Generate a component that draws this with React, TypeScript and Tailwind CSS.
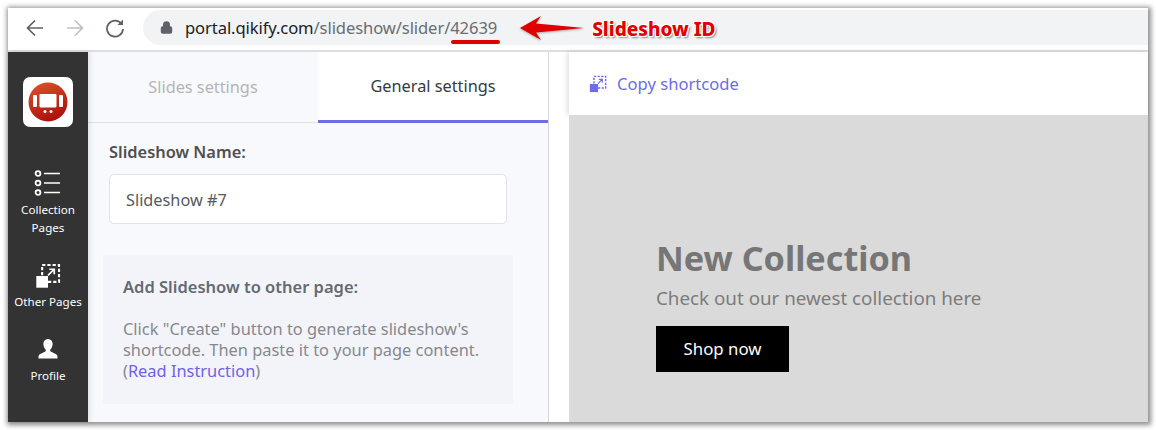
import { Lock } from 'lucide-react';

const CopyIcon = ({ color, size = 20 }: { color: string; size?: number }) => (
  <svg width={size} height={size} viewBox="0 0 20 20" fill="none">
    <rect x="5.5" y="1.5" width="13" height="13" stroke={color} strokeWidth="1.6" strokeDasharray="2.5 1.5" />
    <rect x="1" y="10" width="9" height="9" fill={color} />
    <path d="M10 9.5 14.5 5M11 4.8h3.8v3.8" stroke={color} strokeWidth="1.3" />
  </svg>
);

const CollectionIcon = () => (
  <svg width="28" height="26" viewBox="0 0 28 26" fill="none" stroke="white">
    <circle cx="4" cy="3.5" r="2.4" strokeWidth="1.8" />
    <circle cx="4" cy="13" r="2.4" strokeWidth="1.8" />
    <circle cx="4" cy="22.5" r="2.4" strokeWidth="1.8" />
    <path d="M10 3.5h16M10 13h16M10 22.5h16" strokeWidth="1.6" />
  </svg>
);

const ProfileIcon = () => (
  <svg width="20" height="20" viewBox="0 0 20 20" fill="white">
    <path d="M10 0c3 0 4.6 2.2 4.6 5 0 2.4-1 4.5-2.2 5.6-.4.4-.3 1.4.3 1.8 1.6 1 5.300 2.200 6.300 3.600.5.800.5 2.500.5 3.500H.5c0-1 0-2.700.5-3.500 1-1.400 4.700-2.600 6.300-3.600.6-.4.700-1.400.3-1.800C6.400 9.500 5.400 7.400 5.400 5 5.400 2.200 7 0 10 0Z" />
  </svg>
);

const Logo = () => (
  <div className="flex h-[50px] w-[50px] items-center justify-center rounded-[7px] bg-white">
    <svg width="40" height="40" viewBox="0 0 40 40">
      <defs>
        <linearGradient id="logo" x1="0.2" y1="0" x2="0.6" y2="1">
          <stop offset="0" stopColor="#d9512b" />
          <stop offset="1" stopColor="#a90f0c" />
        </linearGradient>
      </defs>
      <circle cx="20" cy="20" r="19.500" fill="url(#logo)" />
      <rect x="5" y="13" width="4" height="12" rx="1" fill="white" />
      <rect x="11.500" y="12" width="17" height="13.500" rx="1" fill="white" />
      <rect x="31" y="13" width="4" height="12" rx="1" fill="white" />
      <circle cx="17" cy="29.500" r="1.500" fill="white" />
      <circle cx="23" cy="29.500" r="1.500" fill="white" />
    </svg>
  </div>
);

const BrowserBar = () => (
  <div className="flex h-[44px] shrink-0 items-start border-b-2 border-[#dedde3] bg-white">
    <div className="mt-[2px] flex h-[35px] items-center pl-[17px]">
      <svg width="20" height="20" viewBox="0 0 20 20" fill="none" stroke="#5f6368" strokeWidth="1.700">
        <path d="M18 10H3M10 2.500 2.500 10l7.500 7.500" />
      </svg>
      <svg className="ml-[20px]" width="20" height="20" viewBox="0 0 20 20" fill="none" stroke="#bdc0c5" strokeWidth="1.700">
        <path d="M2 10h15M10 2.500 17.500 10 10 17.500" />
      </svg>
      <svg className="ml-[20px]" width="20" height="20" viewBox="0 0 20 20" fill="none" stroke="#5f6368" strokeWidth="1.800">
        <path d="M16.500 6A8 8 0 1 0 18 11" />
        <path d="M18 1.500V7h-5.500z" fill="#5f6368" stroke="none" />
      </svg>
    </div>
    <div className="mt-[2px] ml-[18px] flex h-[35px] flex-1 items-center rounded-l-[18px] bg-[#f1f3f4] pl-[17px]">
      <Lock size={13} strokeWidth={3} className="fill-[#5f6368] text-[#5f6368]" />
      <p className="relative ml-[12px] text-[16.600px] leading-[35px] tracking-[-0.1px] text-[#6a6d71]">
        <span className="text-[#202124]">portal.qikify.com</span>/slideshow/slider/42639
        <span className="absolute right-[-3px] bottom-[1px] h-[4px] w-[49px] rounded-full bg-[#e00000]" />
      </p>
      <div className="relative ml-[23px] flex items-center">
        <svg width="64" height="26" viewBox="0 0 64 26" className="drop-shadow-[0_1px_1px_rgba(0,0,0,0.3)]">
          <path d="M0 13 21 1l-5 7.500L64 13l-48 4.500 5 7.500z" fill="#e00000" />
        </svg>
        <span className="mt-[2px] ml-[8px] text-[19px] leading-[26px] font-extrabold text-[#e00000] [text-shadow:1px_1px_0_#fff,-1px_-1px_0_#fff,1px_-1px_0_#fff,-1px_1px_0_#fff,2px_2px_2px_#888]">
          Slideshow ID
        </span>
      </div>
    </div>
  </div>
);

const Sidebar = () => (
  <aside className="relative z-10 flex w-[80px] shrink-0 flex-col items-center bg-[#333333] pt-[25px] text-[11.600px] leading-[18px] text-white shadow-[2px_0_5px_rgba(0,0,0,0.1)]">
    <Logo />
    <div className="mt-[43px]">
      <CollectionIcon />
    </div>
    <p className="mt-[5px] text-center">
      Collection
      <br />
      Pages
    </p>
    <div className="mt-[26px]">
      <CopyIcon color="white" size={26} />
    </div>
    <p className="mt-[4px]">Other Pages</p>
    <div className="mt-[28px]">
      <ProfileIcon />
    </div>
    <p className="mt-[8px]">Profile</p>
  </aside>
);

const SettingsPanel = () => (
  <section className="flex w-[461px] shrink-0 flex-col border-r border-[#d5d5da] bg-[#f8f9fc]">
    <div className="flex h-[71px] shrink-0">
      <div className="flex w-[230px] items-center justify-center border-b border-[#e2e3e8] text-[16.300px] text-[#b5b5b5]">
        Slides settings
      </div>
      <div className="flex w-[230px] items-center justify-center border-b-[3px] border-[#6e6ce6] bg-white pt-[1px] text-[16.300px] text-[#333a42]">
        General settings
      </div>
    </div>
    <div className="pl-[21px]">
      <p className="mt-[18px] text-[16.400px] leading-[22px] font-semibold text-[#4f4f4f]">Slideshow Name:</p>
      <div className="mt-[11px] flex h-[50px] w-[398px] items-center rounded-[5px] border border-[#e3e3e6] bg-white pt-[2px] pl-[16px] text-[16.300px] text-[#555a60]">
        Slideshow #7
      </div>
    </div>
    <div className="mt-[31px] ml-[15px] h-[149px] w-[410px] bg-[#f3f4fa] pt-[20px] pl-[20px]">
      <p className="text-[16.500px] leading-[24px] font-semibold text-[#636a72]">Add Slideshow to other page:</p>
      <p className="mt-[19px] w-[375px] text-[16.400px] leading-[21px] text-[#87888c]">
        Click "Create" button to generate slideshow's shortcode. Then paste it to your page content. (
        <span className="text-[#6e62e5]">Read Instruction</span>)
      </p>
    </div>
  </section>
);

const Preview = () => (
  <section className="ml-[20px] flex flex-1 flex-col">
    <div className="flex h-[63px] shrink-0 items-center pt-[1px] pl-[20px] text-[16.600px] text-[#6e6ce6] shadow-[-2px_0_5px_rgba(0,0,0,0.12)]">
      <CopyIcon color="#6e6ce6" size={18} />
      <span className="ml-[10px]">Copy shortcode</span>
    </div>
    <div className="flex-1 bg-[#dadada] pt-[121px] pl-[87px]">
      <h2 className="text-[34.200px] leading-[44px] font-bold text-[#767676]">New Collection</h2>
      <p className="mt-[6px] text-[18.800px] leading-[24px] text-[#7c7c7c]">Check out our newest collection here</p>
      <div className="mt-[16px] flex h-[46px] w-[133px] items-center justify-center bg-black text-[16.800px] text-white">
        Shop now
      </div>
    </div>
  </section>
);

export default function App() {
  return (
    <div className="h-[430px] w-[1156px] bg-white pt-[8px] pl-[8px] font-['Noto_Sans',sans-serif]">
      <div className="flex h-[414px] w-[1140px] flex-col bg-white shadow-[1px_1px_5px_2px_rgba(0,0,0,0.45)]">
        <BrowserBar />
        <div className="flex min-h-0 flex-1">
          <Sidebar />
          <SettingsPanel />
          <Preview />
        </div>
      </div>
    </div>
  );
}
